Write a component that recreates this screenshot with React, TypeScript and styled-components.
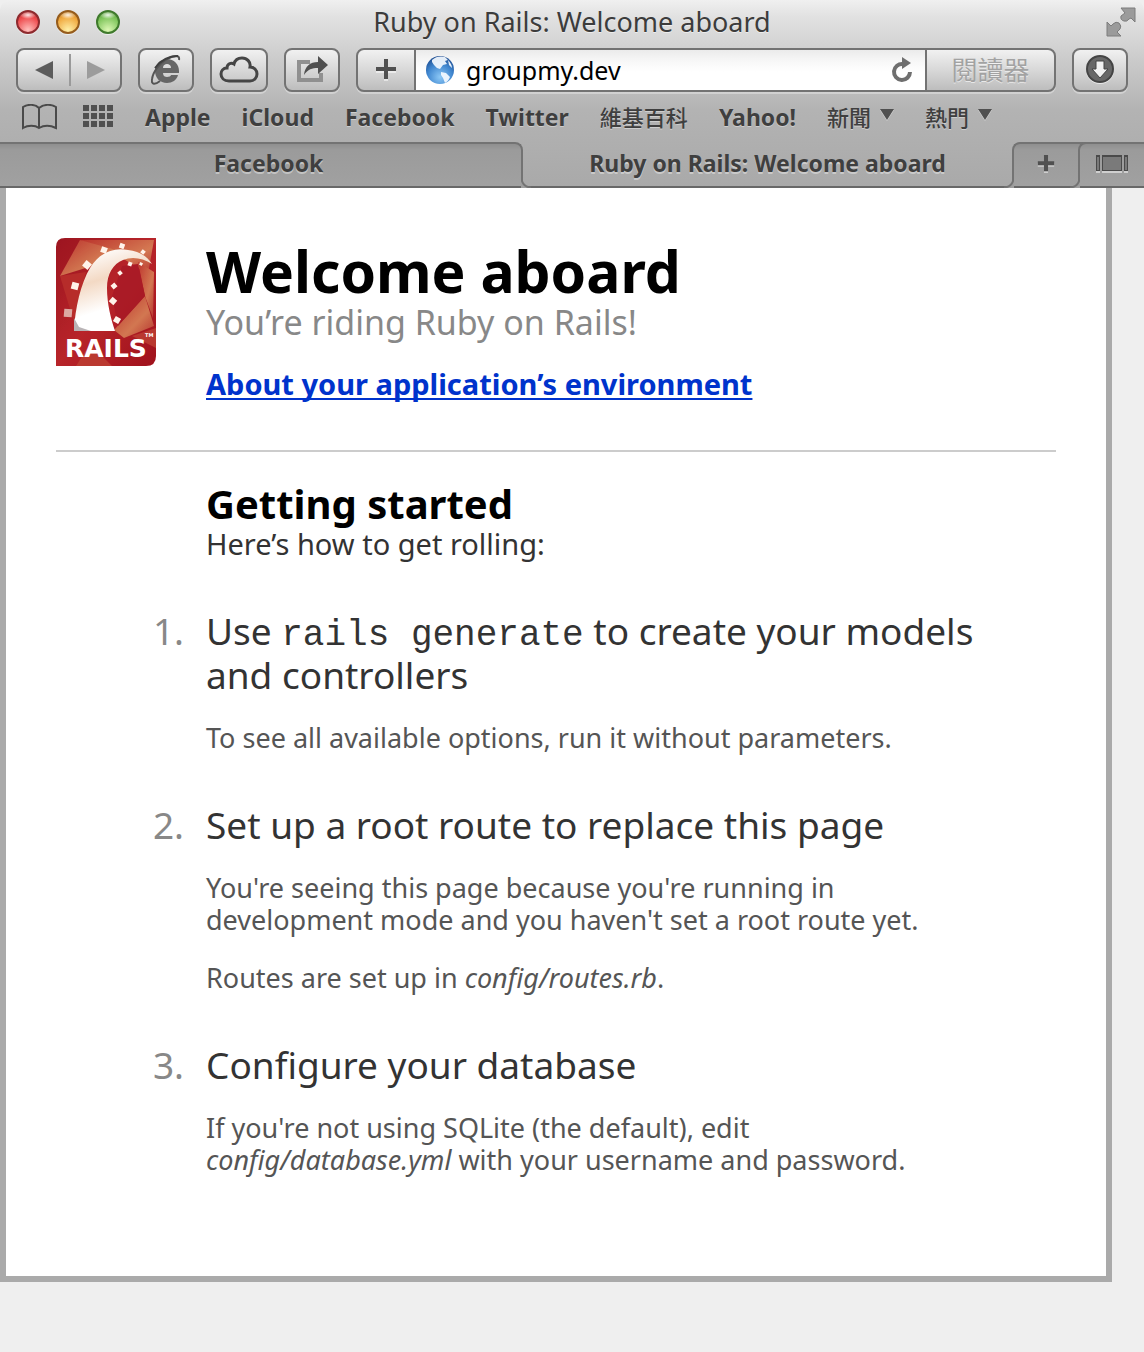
import React from "react";
import styled, { createGlobalStyle, css } from "styled-components";

const sans = `"Noto Sans", "Noto Sans CJK TC", sans-serif`;
const line = "#737373";
const tabDark = "#9d9d9d";

const GlobalStyle = createGlobalStyle`
  *, *::before, *::after { box-sizing: border-box; }
  body { margin: 0; background: #efefef; font-family: ${sans}; }
  h1, h2, h3, p, ol { margin: 0; padding: 0; font-weight: 400; }
  button, input { font-family: inherit; margin: 0; padding: 0; border: 0; background: none; }
  svg { display: block; flex: none; }
`;

const Chrome = styled.header`
  background: linear-gradient(#f0f0f0 0, #e2e2e2 16px, #cbcbcb 60px, #b3b3b3 110px, #a9a9a9 100%);
  border-radius: 10px 10px 0 0;
  color: #3c3c3c;
`;

const TitleBar = styled.div`
  display: grid;
  grid-template-columns: 1fr auto 1fr;
  align-items: center;
  height: 48px;
  padding: 0 8px 4px;
`;

const Lights = styled.div`
  display: flex;
  gap: 16px;
  padding-left: 8px;
`;

const Light = styled.button<{ $rim: string; $mid: string; $glow: string }>`
  width: 24px;
  height: 24px;
  border-radius: 50%;
  && {
    border: 2px solid ${(p) => p.$rim};
    background:
      radial-gradient(ellipse 8px 4px at 50% 3px, #fffd, #fff0),
      radial-gradient(circle at 50% 90%, ${(p) => p.$glow} 0, ${(p) => p.$mid} 65%, ${(p) => p.$rim} 110%);
  }
  box-shadow: 0 1px 0 #fff8;
`;

const WindowTitle = styled.div`
  font-size: 27px;
  line-height: 36px;
  text-shadow: 0 1px 0 #fff8;
`;

const Corner = styled.button`
  justify-self: end;
  display: flex;
`;

const Toolbar = styled.div`
  display: flex;
  gap: 16px;
  padding: 0 16px;
`;

const raised = css`
  border: 2px solid ${line};
  background: linear-gradient(#f1f1f1, #d8d8d8 50%, #bdbdbd);
`;

const ToolGroup = styled.div`
  ${raised}
  display: flex;
  align-items: center;
  height: 44px;
  border-radius: 8px;
  box-shadow: 0 2px 0 #fff5;
`;

const NavButton = styled.button<{ $divided?: boolean }>`
  display: flex;
  align-items: center;
  justify-content: center;
  width: 51px;
  height: 32px;
  border-left: ${(p) => (p.$divided ? "2px solid #9a9a9a" : "0")};
`;

const ToolButton = styled.button<{ $width: number }>`
  && {
    ${raised}
  }
  display: flex;
  align-items: center;
  justify-content: center;
  width: ${(p) => p.$width}px;
  height: 44px;
  border-radius: 8px;
  box-shadow: 0 2px 0 #fff5;
`;

const AddressGroup = styled.div`
  ${raised}
  display: flex;
  flex: 1;
  min-width: 0;
  height: 44px;
  border-radius: 8px;
  overflow: hidden;
  box-shadow: 0 2px 0 #fff5;
`;

const AddButton = styled.button`
  display: flex;
  align-items: center;
  justify-content: center;
  width: 56px;
`;

const Field = styled.label`
  display: flex;
  align-items: center;
  flex: 1;
  min-width: 0;
  gap: 12px;
  padding: 0 12px 0 10px;
  border: solid ${line};
  border-width: 0 2px;
  background: linear-gradient(#ebebeb, #f8f8f8 12px, #fff 22px);
`;

const Address = styled.input`
  flex: 1;
  min-width: 0;
  && { font-size: 25px; }
  line-height: 36px;
  color: #000;
  outline: 0;
`;

const Reload = styled.button`
  display: flex;
`;

const Reader = styled.button`
  width: 127px;
  && { font-size: 26px; }
  line-height: 36px;
  color: #a2a2a2;
  text-shadow: 0 1px 0 #fff9;
`;

const Bookmarks = styled.nav`
  display: flex;
  align-items: center;
  gap: 31px;
  height: 50px;
  padding: 0 22px;
`;

const BookmarkTools = styled.div`
  display: flex;
  gap: 26px;
`;

const IconButton = styled.button`
  display: flex;
`;

const Bookmark = styled.a<{ $cjk?: boolean }>`
  display: flex;
  align-items: center;
  gap: 9px;
  font-size: ${(p) => (p.$cjk ? 22 : 23)}px;
  line-height: 32px;
  font-weight: ${(p) => (p.$cjk ? 500 : 700)};
  color: #3f3f3f;
  text-decoration: none;
  text-shadow: 0 1px 0 #fff6;
  white-space: nowrap;
`;

const TabStrip = styled.div`
  display: flex;
  height: 46px;
  box-shadow: inset 0 -2px 0 #686868;
`;

const darkFace = css`
  border: 0 solid #737373;
  border-top-width: 2px;
  background: linear-gradient(#8f8f8f, #9b9b9b 6px, #a1a1a1);
  box-shadow: inset 0 -2px 0 #686868;
`;

const Tab = styled.button<{ $active?: boolean }>`
  && {
    ${(p) => (p.$active ? "" : darkFace)}
    font-size: 23px;
    font-weight: 700;
    padding-bottom: ${(p) => (p.$active ? 4 : 6)}px;
  }
  position: relative;
  flex: 1 1 ${(p) => (p.$active ? 0 : 34)}px;
  min-width: 0;
  line-height: 32px;
  color: #3f3f3f;
  text-shadow: 0 2px 0 #fff6;
  ${(p) =>
    !p.$active &&
    css`
      && {
        border-right-width: 2px;
        padding-left: 16px;
      }
      border-radius: 0 8px 0 0;
      &::after {
        content: "";
        position: absolute;
        left: 100%;
        bottom: 0;
        width: 10px;
        height: 10px;
        background: radial-gradient(circle at 100% 0, #0000 8px, #737373 9px, #737373 10px, ${tabDark} 11px);
      }
    `}
`;

const EndTab = styled.button<{ $last?: boolean }>`
  && {
    ${darkFace}
    border-left-width: 2px;
    padding: 0 ${(p) => (p.$last ? 0 : 8)}px 4px 0;
    margin-right: ${(p) => (p.$last ? 0 : -8)}px;
  }
  position: relative;
  display: flex;
  align-items: center;
  justify-content: center;
  width: ${(p) => (p.$last ? 66 : 74)}px;
  border-radius: 8px 0 0 0;
  &::before {
    content: "";
    position: absolute;
    right: 100%;
    bottom: 0;
    width: 10px;
    height: 10px;
    background: radial-gradient(circle at 0 0, #0000 8px, #737373 9px, #737373 10px, ${tabDark} 11px);
  }
`;

const Page = styled.main`
  margin-right: 32px;
  padding: 50px 50px 100px;
  border: 6px solid #aaa;
  border-top: 0;
  background: #fff;
  color: #333;
`;

const Intro = styled.section`
  display: flex;
  align-items: flex-start;
  gap: 50px;
  padding-bottom: 50px;
  border-bottom: 2px solid #ccc;
`;

const Heading = styled.h1`
  && { font-weight: 700; }
  font-size: 57px;
  line-height: 66px;
  color: #000;
`;

const Tagline = styled.p`
  font-size: 34px;
  line-height: 36px;
  color: #888;
`;

const About = styled.p`
  && { margin-top: 28px; }
  font-size: 29px;
  line-height: 32px;
`;

const AboutLink = styled.a`
  font-weight: 700;
  color: #03c;
  text-decoration-thickness: 2px;
  text-underline-offset: 3px;
  text-decoration-skip-ink: none;
`;

const Guide = styled.section`
  padding: 28px 50px 0 150px;
`;

const GuideTitle = styled.h2`
  && { font-weight: 700; }
  font-size: 40px;
  line-height: 48px;
  color: #000;
`;

const Lead = styled.p`
  font-size: 29px;
  line-height: 32px;
`;

const Steps = styled.ol`
  && {
    margin: 50px 0 0 -150px;
  }
  display: grid;
  gap: 50px;
  list-style: none;
`;

const Step = styled.li`
  display: grid;
  grid-template-columns: 128px 1fr;
  column-gap: 22px;
`;

const StepNumber = styled.span`
  font-size: 37px;
  line-height: 42px;
  text-align: right;
  color: #888;
`;

const StepTitle = styled.h3`
  font-size: 37px;
  line-height: 42px;
  code {
    font-family: "Liberation Mono", monospace;
    font-size: 36px;
    line-height: 1;
  }
`;

const StepBody = styled.div`
  display: grid;
  gap: 26px;
`;

const StepText = styled.p`
  max-width: 740px;
  font-size: 27px;
  line-height: 32px;
  color: #555;
`;

const Plus = ({ size, thick = 5 }: { size: number; thick?: number }) => (
  <svg width={size} height={size} viewBox="0 0 20 22">
    <path d="M10 2v20M0 12h20" stroke="#fff" strokeOpacity=".5" strokeWidth={thick} />
    <path d="M10 0v20M0 10h20" stroke="#505050" strokeWidth={thick} />
  </svg>
);

const Triangle = () => (
  <svg width="14" height="16" viewBox="0 0 14 16">
    <path d="M0 1h14L7 12z" fill="#fff" opacity=".5" />
    <path d="M0 0h14L7 11z" fill="#505050" />
  </svg>
);

const ExpandIcon = () => (
  <svg width="30" height="30" viewBox="0 0 30 30">
    <g fill="#9b9b9b" stroke="#7c7c7c" strokeWidth="1">
      <path d="M15 1h14v14l-4-4-2 1q-2 3-5 2-4-1-3-5l4-3z" />
      <path d="M1 15l4 4 2-2q3-3 6-1 3 3 1 6l-3 3 4 4H1z" />
    </g>
  </svg>
);

const ExplorerIcon = () => (
  <svg width="30" height="32" viewBox="0 0 30 32">
    <path
      fillRule="evenodd"
      fill="#666"
      d="M16 5c7 0 12 5 12 12v2H12c0 3 2 4 4 4s4-1 4-2h7c-1 5-6 8-11 8C9 29 4 24 4 17S9 5 16 5zM12 14h8c0-3-2-4-4-4s-4 1-4 4z"
    />
    <path d="M28 6c1-5-4-5-10-2C9 8 2 18 1 25c-1 6 3 6 8 2" fill="none" stroke="#555" strokeWidth="2" />
    <path d="M4 14C10 6 19 2 27 2" fill="none" stroke="#3f3f3f" strokeWidth="2" />
  </svg>
);

const CloudIcon = () => (
  <svg width="40" height="30" viewBox="0 0 40 30">
    <path
      d="M10 26C5 26 2 23 2 19c0-3 2-6 6-6 0-4 4-6 7-4C16 5 19 3 23 3c5 0 9 4 8 9 4 0 7 3 7 7s-3 7-7 7z"
      fill="none"
      stroke="#454545"
      strokeWidth="3"
    />
  </svg>
);

const ShareIcon = () => (
  <svg width="34" height="28" viewBox="0 0 34 28">
    <path d="M15 6H4v18h22v-7" fill="none" stroke="#909090" strokeWidth="4" />
    <path d="M9 19C10 10 15 6 23 6V0l10 9-10 9v-6c-6 0-10 1-14 7z" fill="#505050" />
  </svg>
);

const GlobeIcon = () => (
  <svg width="28" height="30" viewBox="0 0 28 30">
    <defs>
      <radialGradient id="sea" cx="50%" cy="75%" r="75%">
        <stop offset="0" stopColor="#8cc8f6" />
        <stop offset=".6" stopColor="#3f86cf" />
        <stop offset="1" stopColor="#1c4a8e" />
      </radialGradient>
    </defs>
    <circle cx="14" cy="15" r="14" fill="url(#sea)" />
    <path d="M6 5c4-4 9-4 13-3l3 3-3 1 2 3-4 1-3 4-3-1-3-3-2-3z" fill="#f4faff" opacity=".92" />
    <path d="M15 17l5 1 4 4c-1 3-3 5-5 6l-2-5-2-3zM22 5c2 2 4 5 4 8l-3-3z" fill="#f4faff" opacity=".92" />
  </svg>
);

const ReloadIcon = () => (
  <svg width="22" height="26" viewBox="0 0 22 26">
    <path d="M12 7a8 8 0 1 0 7 8" fill="none" stroke="#6f6f6f" strokeWidth="4" />
    <path d="M11 0l9 6-9 6z" fill="#6f6f6f" />
  </svg>
);

const DownloadIcon = () => (
  <svg width="28" height="30" viewBox="0 0 28 30">
    <circle cx="14" cy="15" r="14" fill="#fff" opacity=".6" />
    <circle cx="14" cy="14" r="13" fill="#686868" stroke="#444" strokeWidth="2" />
    <path d="M10 6h8v8h4l-8 9-8-9h4z" fill="#f2f2f2" stroke="#444" />
  </svg>
);

const BookIcon = () => (
  <svg width="35" height="26" viewBox="0 0 35 26">
    <path
      d="M1 24V3c5-3 12-3 16 1 5-4 12-4 17-1v21c-6-3-12-3-17 0-4-3-11-3-16 0zM17 4v20"
      fill="none"
      stroke="#4a4a4a"
      strokeWidth="2"
    />
  </svg>
);

const GridIcon = () => (
  <svg width="31" height="24" viewBox="0 0 31 24">
    {[0, 8, 16, 24].map((x) =>
      [1, 9, 17].map((y) => <rect key={`${x}-${y}`} x={x} y={y} width="6" height="6" fill="#505050" />)
    )}
  </svg>
);

const OverviewIcon = () => (
  <svg width="32" height="18" viewBox="0 0 32 18">
    <path d="M0 17h4M6 17h20M28 17h4" stroke="#fff" strokeOpacity=".5" strokeWidth="2" />
    <path d="M0 0h4v16H0zM28 0h4v16h-4zM6 0h20v16H6z" fill="#4a4a4a" />
    <path d="M1 2h2v13H1zM29 2h2v13h-2zM7 2h18v13H7z" fill="#7a7a7a" />
  </svg>
);

const ties: [number, number, number, number][] = [
  [12, 75, 8, 5], [19, 48, 7, 15], [31, 27, 7, 40], [48, 12, 6, 20], [66, 8, 5, 20], [87, 14, 4, 40],
  [74, 26, 4, 20], [85, 26, 3, 30], [64, 35, 4, 50], [58, 48, 5, 50], [57, 63, 6, 40], [61, 82, 6, 30],
];

const RailsLogo = () => (
  <svg width="100" height="128" viewBox="0 0 100 128" role="img" aria-label="Rails">
    <defs>
      <clipPath id="badge">
        <path d="M9 0h91v118q0 10-10 10H0V9q0-9 9-9z" />
      </clipPath>
      <linearGradient id="ground" x1="0" y1="0" x2="1" y2="1">
        <stop offset="0" stopColor="#9c1520" />
        <stop offset=".5" stopColor="#b8252a" />
        <stop offset="1" stopColor="#a0121d" />
      </linearGradient>
      <linearGradient id="facet" x1="0" y1="0" x2="1" y2="1">
        <stop offset="0" stopColor="#c0392f" />
        <stop offset=".6" stopColor="#d9885a" />
        <stop offset="1" stopColor="#b93a31" />
      </linearGradient>
      <linearGradient id="track" x1=".3" y1="0" x2=".6" y2="1">
        <stop offset="0" stopColor="#fff" />
        <stop offset=".35" stopColor="#f3d9c4" />
        <stop offset=".7" stopColor="#fff" />
      </linearGradient>
    </defs>
    <g clipPath="url(#badge)">
      <path d="M0 0h100v128H0z" fill="url(#ground)" />
      <g opacity=".85">
        <path d="M24 2l74 0-6 34-26-16z" fill="url(#facet)" />
        <path d="M24 2L4 38l32-10 24-16z" fill="url(#facet)" />
        <path d="M4 38l14 46 12-50z" fill="#b9302c" />
        <path d="M82 24l16 10-1 46-8-22z" fill="url(#facet)" />
        <path d="M89 58l9 30-30 12-10-8z" fill="url(#facet)" />
        <path d="M66 28l16-2 7 32-27 30-6-30z" fill="#a91a26" />
        <path d="M20 128l14-22 22 22zM76 98l24-8v20z" fill="#bd3f33" />
      </g>
      <path
        d="M18 93C19 70 25 45 34 30 44 14 58 9 72 12c11 1 20 7 24 14-9-6-20-8-29-4-10 4-16 14-16 28 0 16 4 31 8 43z"
        fill="url(#track)"
      />
      <path d="M18 80l5 9 12 4H18z" fill="#b9b4b6" />
      {ties.map(([x, y, s, turn]) => (
        <rect
          key={`${x}-${y}`}
          x={x - s / 2}
          y={y - s / 2}
          width={s}
          height={s}
          fill={x === 12 ? "#dca9a2" : "#fff3ea"}
          transform={`rotate(${turn} ${x} ${y})`}
        />
      ))}
      <text x="9" y="119" fontFamily="DejaVu Sans, sans-serif" fontWeight="700" fontSize="25" fill="#fff">
        RAILS
      </text>
      <text x="89" y="99" fontFamily="DejaVu Sans, sans-serif" fontWeight="700" fontSize="5" fill="#fff">
        TM
      </text>
    </g>
  </svg>
);

const bookmarks = [
  { label: "Apple" },
  { label: "iCloud" },
  { label: "Facebook" },
  { label: "Twitter" },
  { label: "維基百科", cjk: true },
  { label: "Yahoo!" },
  { label: "新聞", cjk: true, menu: true },
  { label: "熱門", cjk: true, menu: true },
];

const steps = [
  {
    title: <>Use <code>rails generate</code> to create your models and controllers</>,
    body: ["To see all available options, run it without parameters."],
  },
  {
    title: "Set up a root route to replace this page",
    body: [
      <>You're seeing this page because you're running in development mode and you haven't set a root route yet.</>,
      <>Routes are set up in <em>config/routes.rb</em>.</>,
    ],
  },
  {
    title: "Configure your database",
    body: [
      <>If you're not using SQLite (the default), edit <em>config/database.yml</em> with your username and password.</>,
    ],
  },
];

export default function App() {
  return (
    <>
      <GlobalStyle />
      <Chrome>
        <TitleBar>
          <Lights>
            <Light aria-label="Close" $rim="#8e2a2e" $mid="#ee4a4d" $glow="#ffc0bd" />
            <Light aria-label="Minimize" $rim="#965c1c" $mid="#f0a83e" $glow="#fff0a8" />
            <Light aria-label="Zoom" $rim="#3f7a2c" $mid="#7dc45a" $glow="#dcf8b4" />
          </Lights>
          <WindowTitle>Ruby on Rails: Welcome aboard</WindowTitle>
          <Corner aria-label="Full screen"><ExpandIcon /></Corner>
        </TitleBar>
        <Toolbar>
          <ToolGroup>
            <NavButton aria-label="Back">
              <svg width="18" height="18" viewBox="0 0 18 18"><path d="M18 0v18L0 9z" fill="#5c5c5c" /></svg>
            </NavButton>
            <NavButton aria-label="Forward" $divided>
              <svg width="18" height="18" viewBox="0 0 18 18"><path d="M0 0v18l18-9z" fill="#9c9c9c" /></svg>
            </NavButton>
          </ToolGroup>
          <ToolButton aria-label="Open in Explorer" $width={56}><ExplorerIcon /></ToolButton>
          <ToolButton aria-label="iCloud tabs" $width={58}><CloudIcon /></ToolButton>
          <ToolButton aria-label="Share" $width={56}><ShareIcon /></ToolButton>
          <AddressGroup>
            <AddButton aria-label="Add bookmark"><Plus size={22} thick={4} /></AddButton>
            <Field>
              <GlobeIcon />
              <Address aria-label="Address" defaultValue="groupmy.dev" />
              <Reload aria-label="Reload"><ReloadIcon /></Reload>
            </Field>
            <Reader>閱讀器</Reader>
          </AddressGroup>
          <ToolButton aria-label="Downloads" $width={56}><DownloadIcon /></ToolButton>
        </Toolbar>
        <Bookmarks>
          <BookmarkTools>
            <IconButton aria-label="Bookmarks"><BookIcon /></IconButton>
            <IconButton aria-label="Top sites"><GridIcon /></IconButton>
          </BookmarkTools>
          {bookmarks.map((b) => (
            <Bookmark key={b.label} href="#" $cjk={b.cjk}>
              {b.label}
              {b.menu && <Triangle />}
            </Bookmark>
          ))}
        </Bookmarks>
        <TabStrip>
          <Tab>Facebook</Tab>
          <Tab $active>Ruby on Rails: Welcome aboard</Tab>
          <EndTab aria-label="New tab"><Plus size={18} /></EndTab>
          <EndTab aria-label="Show all tabs" $last><OverviewIcon /></EndTab>
        </TabStrip>
      </Chrome>
      <Page>
        <Intro>
          <RailsLogo />
          <div>
            <Heading>Welcome aboard</Heading>
            <Tagline>You’re riding Ruby on Rails!</Tagline>
            <About><AboutLink href="#">About your application’s environment</AboutLink></About>
          </div>
        </Intro>
        <Guide>
          <GuideTitle>Getting started</GuideTitle>
          <Lead>Here’s how to get rolling:</Lead>
          <Steps>
            {steps.map((step, i) => (
              <Step key={i}>
                <StepNumber>{i + 1}.</StepNumber>
                <StepBody>
                  <StepTitle>{step.title}</StepTitle>
                  {step.body.map((text, j) => (
                    <StepText key={j}>{text}</StepText>
                  ))}
                </StepBody>
              </Step>
            ))}
          </Steps>
        </Guide>
      </Page>
    </>
  );
}
